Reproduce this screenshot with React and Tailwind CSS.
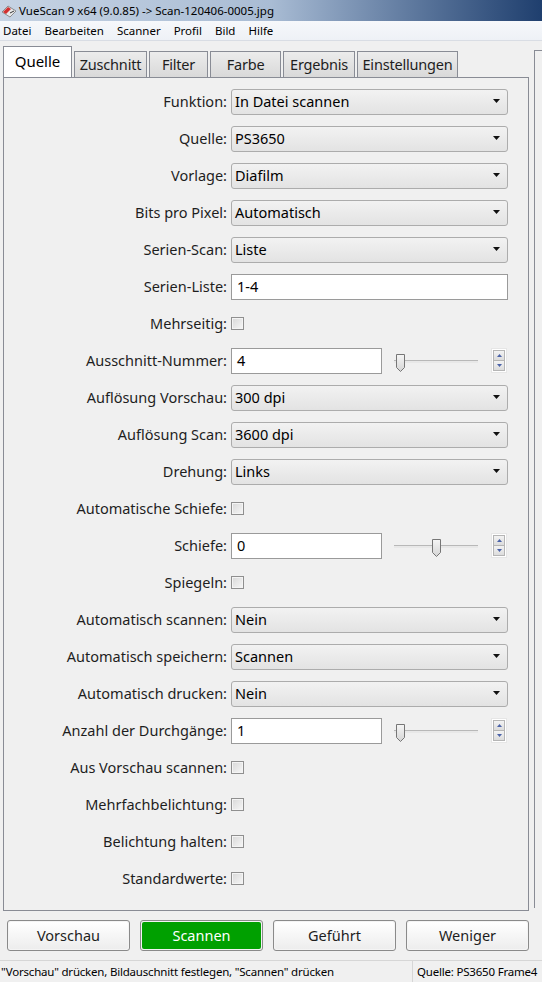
const FONT = "font-['Segoe_UI','Noto_Sans','Open_Sans',sans-serif]";

const rows = [
  { label: "Funktion:", type: "select", value: "In Datei scannen" },
  { label: "Quelle:", type: "select", value: "PS3650" },
  { label: "Vorlage:", type: "select", value: "Diafilm" },
  { label: "Bits pro Pixel:", type: "select", value: "Automatisch" },
  { label: "Serien-Scan:", type: "select", value: "Liste" },
  { label: "Serien-Liste:", type: "text", value: "1-4" },
  { label: "Mehrseitig:", type: "check" },
  { label: "Ausschnitt-Nummer:", type: "slider", value: "4", pos: 0 },
  { label: "Auflösung Vorschau:", type: "select", value: "300 dpi" },
  { label: "Auflösung Scan:", type: "select", value: "3600 dpi" },
  { label: "Drehung:", type: "select", value: "Links" },
  { label: "Automatische Schiefe:", type: "check" },
  { label: "Schiefe:", type: "slider", value: "0", pos: 36 },
  { label: "Spiegeln:", type: "check" },
  { label: "Automatisch scannen:", type: "select", value: "Nein" },
  { label: "Automatisch speichern:", type: "select", value: "Scannen" },
  { label: "Automatisch drucken:", type: "select", value: "Nein" },
  { label: "Anzahl der Durchgänge:", type: "slider", value: "1", pos: 0 },
  { label: "Aus Vorschau scannen:", type: "check" },
  { label: "Mehrfachbelichtung:", type: "check" },
  { label: "Belichtung halten:", type: "check" },
  { label: "Standardwerte:", type: "check" },
];

function Select({ value }) {
  return (
    <div className="flex h-[26px] w-[277px] items-center justify-between rounded-[3px] border border-[#acacac] bg-gradient-to-b from-[#f2f2f2] to-[#e3e3e3] pl-[3px] pr-[6px] text-[14.5px] leading-none text-black">
      <span>{value}</span>
      <svg width="8" height="5" viewBox="0 0 8 5">
        <path d="M0 0h7l-3.5 4z" fill="#111" />
      </svg>
    </div>
  );
}

function TextBox({ value, w = "w-[277px]" }) {
  return (
    <div className={`flex h-[26px] ${w} items-center border border-[#9a9a9a] bg-white pl-[5px] text-[14.5px] leading-none text-black`}>
      {value}
    </div>
  );
}

function Check() {
  return (
    <div className="h-[13px] w-[13px] border border-[#8f8f8f] bg-gradient-to-br from-[#d8d8d8] to-[#f7f7f7] shadow-[inset_0_0_0_1px_#f4f4f4]" />
  );
}

function Slider({ value, pos }) {
  return (
    <div className="flex items-center">
      <TextBox value={value} w="w-[151px]" />
      <div className="relative ml-[12px] h-[26px] w-[84px]">
        <div className="absolute left-0 right-0 top-[12px] h-[3px] border-t border-[#b8b8b8] bg-[#e8e8e8]" />
        <svg className="absolute top-[5px]" style={{ left: pos + 1 }} width="11" height="20" viewBox="0 0 11 20">
          <defs>
            <linearGradient id="tg" x1="0" x2="0" y1="0" y2="1">
              <stop offset="0" stopColor="#f6f6f6" />
              <stop offset="1" stopColor="#d4d4d4" />
            </linearGradient>
          </defs>
          <path d="M1.5 1.5h8v13l-4 4l-4-4z" fill="url(#tg)" stroke="#767676" strokeLinejoin="round" />
        </svg>
      </div>
      <div className="ml-[13px] flex h-[25px] w-[16px] flex-col border border-[#e6e6e6] bg-white p-[1px]">
        <div className="flex flex-1 items-center justify-center border border-[#b5b5b5] bg-gradient-to-b from-[#f3f3f3] to-[#dcdcdc]">
          <svg width="5" height="3" viewBox="0 0 5 3"><path d="M0 3h5L2.5 0z" fill="#4a62a8" /></svg>
        </div>
        <div className="flex flex-1 items-center justify-center border border-t-0 border-[#b5b5b5] bg-gradient-to-b from-[#f3f3f3] to-[#dcdcdc]">
          <svg width="5" height="3" viewBox="0 0 5 3"><path d="M0 0h5L2.5 3z" fill="#4a62a8" /></svg>
        </div>
      </div>
    </div>
  );
}

function Row({ row }) {
  return (
    <div className="flex h-[37px] items-center">
      <div className="w-[224px] whitespace-nowrap pr-[1px] text-right text-[14.5px] text-[#1e1e1e]">{row.label}</div>
      <div className="ml-[3px]">
        {row.type === "select" && <Select value={row.value} />}
        {row.type === "text" && <TextBox value={row.value} />}
        {row.type === "check" && <Check />}
        {row.type === "slider" && <Slider value={row.value} pos={row.pos} />}
      </div>
    </div>
  );
}

function Button({ children, green }) {
  return (
    <div className="h-[31px] w-[123px] rounded-[3px] border border-[#8a8a8a] bg-[#f4f4f4] p-[1px]">
      <div
        className={`flex h-full items-center justify-center rounded-[2px] text-[14.5px] ${
          green ? "bg-[#00a000] text-white" : "bg-gradient-to-b from-white to-[#ededed] text-[#1e1e1e]"
        }`}
      >
        {children}
      </div>
    </div>
  );
}

const tabs = ["Zuschnitt", "Filter", "Farbe", "Ergebnis", "Einstellungen"];
const tabW = ["w-[73px]", "w-[59px]", "w-[71px]", "w-[72px]", "w-[101px]"];

export default function App() {
  return (
    <div className={`${FONT} flex h-[982px] w-[542px] flex-col overflow-hidden bg-[#f0f0f0]`}>
      {/* title bar */}
      <div className="flex h-[21px] items-center bg-gradient-to-r from-[#c6d3e3] via-[#a9bcd4] to-[#1f3f6e] pl-[1px] text-[11.5px] text-black">
        <svg width="16" height="14" viewBox="0 0 16 14">
          <path d="M1 8l6-6 8 5-6 6z" fill="#e8e8e8" stroke="#777" strokeWidth="0.8" />
          <path d="M2 8l5-5 3 2-5 5z" fill="#d23030" />
          <path d="M9 9l4-2" stroke="#333" strokeWidth="1" />
        </svg>
        <span className="ml-[2px]">VueScan 9 x64 (9.0.85) -&gt; Scan-120406-0005.jpg</span>
      </div>
      {/* menu */}
      <div className="flex h-[20px] items-center gap-[13px] border-b border-[#d9dde4] bg-gradient-to-b from-[#f6f8fb] to-[#eef1f6] pl-[3px] text-[11.5px] text-black">
        <span>Datei</span>
        <span>Bearbeiten</span>
        <span>Scanner</span>
        <span>Profil</span>
        <span>Bild</span>
        <span>Hilfe</span>
      </div>

      <div className="flex flex-1 pt-[6px]">
        <div className="ml-[3px] flex w-[530px] flex-col">
          {/* tabs */}
          <div className="relative z-10 flex h-[30px] items-end">
            <div className="flex h-[31px] w-[69px] items-center justify-center border border-b-0 border-[#898c95] bg-white pb-[2px] text-[15px] text-black">
              Quelle
            </div>
            {tabs.map((t, i) => (
              <div
                key={t}
                className={`ml-[2px] flex h-[26px] ${tabW[i]} items-center justify-center whitespace-nowrap border border-b-0 border-[#898c95] bg-gradient-to-b from-[#ececec] to-[#d9d9d9] text-[14.5px] tracking-[-0.2px] text-[#1e1e1e]`}
              >
                {t}
              </div>
            ))}
          </div>
          {/* panel */}
          <div className="h-[834px] border border-[#898c95] bg-[#f0f0f0] pt-[5px]">
            {rows.map((r) => (
              <Row key={r.label} row={r} />
            ))}
          </div>
          {/* buttons */}
          <div className="mt-[9px] flex gap-[10px] pl-[4px]">
            <Button>Vorschau</Button>
            <Button green>Scannen</Button>
            <Button>Geführt</Button>
            <Button>Weniger</Button>
          </div>
        </div>
        <div className="ml-[5px] mt-[3px] h-[858px] w-[10px] border-l border-t border-[#898c95]" />
      </div>

      {/* status bar */}
      <div className="flex h-[22px] items-center whitespace-nowrap border-t border-[#d6d6d6] bg-[#f0f0f0] text-[11.5px] tracking-[-0.2px] text-black">
        <div className="w-[412px] shrink-0 pl-[1px]">"Vorschau" drücken, Bildauschnitt festlegen, "Scannen" drücken</div>
        <div className="flex h-full shrink-0 items-center border-l border-[#d6d6d6] pl-[4px]">Quelle: PS3650 Frame4</div>
      </div>
    </div>
  );
}
